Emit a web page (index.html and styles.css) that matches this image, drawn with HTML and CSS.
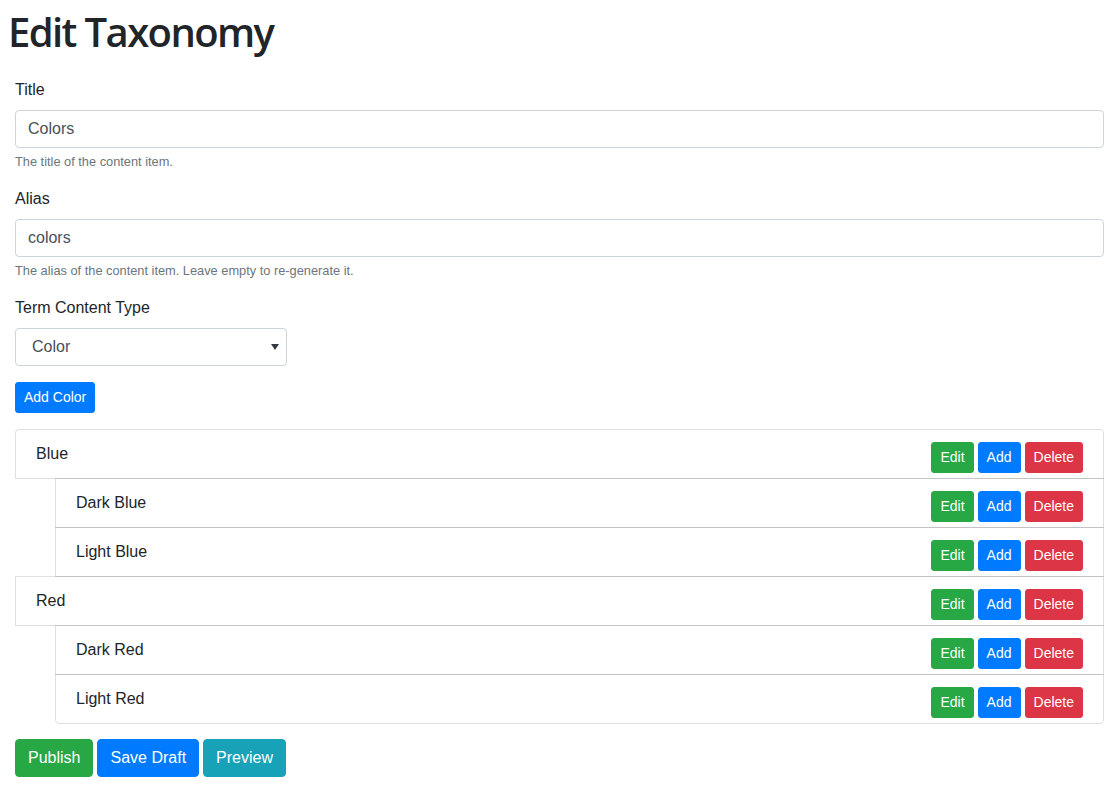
FILE: index.html
```html
<!DOCTYPE html>
<html lang="en">
<head>
<meta charset="utf-8">
<title>Edit Taxonomy</title>
<link rel="stylesheet" href="styles.css">
</head>
<body>
<h1 class="page-title">Edit Taxonomy</h1>
<form class="editor">
  <div class="form-group">
    <label class="field-label">Title</label>
    <input class="form-control" type="text" value="Colors">
    <small class="hint">The title of the content item.</small>
  </div>
  <div class="form-group">
    <label class="field-label">Alias</label>
    <input class="form-control" type="text" value="colors">
    <small class="hint">The alias of the content item. Leave empty to re-generate it.</small>
  </div>
  <div class="form-group">
    <label class="field-label">Term Content Type</label>
    <div class="select-wrap">
      <select class="custom-select"><option>Color</option></select>
    </div>
  </div>
  <button type="button" class="btn btn-sm btn-primary add-root">Add Color</button>
  <ul class="term-list">
    <li class="term"><span class="term-name">Blue</span><span class="actions"><button type="button" class="btn btn-sm btn-success">Edit</button><button type="button" class="btn btn-sm btn-primary">Add</button><button type="button" class="btn btn-sm btn-danger">Delete</button></span></li>
    <li class="term child"><span class="term-name">Dark Blue</span><span class="actions"><button type="button" class="btn btn-sm btn-success">Edit</button><button type="button" class="btn btn-sm btn-primary">Add</button><button type="button" class="btn btn-sm btn-danger">Delete</button></span></li>
    <li class="term child"><span class="term-name">Light Blue</span><span class="actions"><button type="button" class="btn btn-sm btn-success">Edit</button><button type="button" class="btn btn-sm btn-primary">Add</button><button type="button" class="btn btn-sm btn-danger">Delete</button></span></li>
    <li class="term"><span class="term-name">Red</span><span class="actions"><button type="button" class="btn btn-sm btn-success">Edit</button><button type="button" class="btn btn-sm btn-primary">Add</button><button type="button" class="btn btn-sm btn-danger">Delete</button></span></li>
    <li class="term child"><span class="term-name">Dark Red</span><span class="actions"><button type="button" class="btn btn-sm btn-success">Edit</button><button type="button" class="btn btn-sm btn-primary">Add</button><button type="button" class="btn btn-sm btn-danger">Delete</button></span></li>
    <li class="term child"><span class="term-name">Light Red</span><span class="actions"><button type="button" class="btn btn-sm btn-success">Edit</button><button type="button" class="btn btn-sm btn-primary">Add</button><button type="button" class="btn btn-sm btn-danger">Delete</button></span></li>
  </ul>
  <div class="footer-actions">
    <button type="button" class="btn btn-success">Publish</button>
    <button type="button" class="btn btn-primary">Save Draft</button>
    <button type="button" class="btn btn-info">Preview</button>
  </div>
</form>
</body>
</html>
```
FILE: styles.css
```css
* { box-sizing: border-box; }
html, body { margin: 0; padding: 0; }
body {
  font-family: "Liberation Sans", Arial, sans-serif;
  font-size: 16px;
  line-height: 1.5;
  color: #212529;
  background: #fff;
}
.page-title {
  margin: 8px 0 22px 8px;
  font-size: 40px;
  line-height: 48px;
  font-weight: 600;
  font-family: "Open Sans", "Liberation Sans", sans-serif;
  letter-spacing: -1.6px;
  color: #212529;
}
.editor { padding: 0 10px 20px 15px; }
.form-group { margin-bottom: 16px; }
.field-label { display: block; margin-bottom: 8px; line-height: 24px; }
.form-control {
  display: block;
  width: 100%;
  height: 38px;
  padding: 6px 12px;
  font: inherit;
  color: #495057;
  border: 1px solid #ced4da;
  border-radius: 4px;
  background: #fff;
}
.hint {
  display: block;
  margin-top: 4px;
  font-size: 12.8px;
  line-height: 19.2px;
  color: #6c757d;
}
.select-wrap { position: relative; width: 272px; }
.select-wrap::after {
  content: "";
  position: absolute;
  right: 8px;
  top: 16px;
  border-left: 4px solid transparent;
  border-right: 4px solid transparent;
  border-top: 6px solid #343a40;
}
.custom-select {
  display: block;
  width: 272px;
  height: 38px;
  padding: 6px 28px 6px 16px;
  font: inherit;
  color: #495057;
  border: 1px solid #ced4da;
  border-radius: 4px;
  background: #fff;
  -webkit-appearance: none;
  appearance: none;
}
.btn {
  display: inline-block;
  font: inherit;
  font-size: 16px;
  line-height: 24px;
  padding: 6px 12px;
  border: 1px solid transparent;
  border-radius: 4px;
  color: #fff;
  cursor: pointer;
  margin: 0;
}
.btn-sm { font-size: 14px; line-height: 21px; padding: 4px 8px; border-radius: 3px; }
.btn-primary { background: #007bff; border-color: #007bff; }
.btn-success { background: #28a745; border-color: #28a745; }
.btn-danger { background: #dc3545; border-color: #dc3545; }
.btn-info { background: #17a2b8; border-color: #17a2b8; }
.add-root { margin-bottom: 16px; }
.term-list { list-style: none; margin: 0 0 15px 0; padding: 0; }
.term {
  display: flex;
  align-items: flex-start;
  justify-content: space-between;
  padding: 12px 20px;
  height: 50px;
  margin-bottom: -1px;
  border: 1px solid rgba(0,0,0,.125);
}
.term:first-child { border-radius: 4px 4px 0 0; }
.term:last-child { border-radius: 0 0 4px 4px; margin-bottom: 0; }
.term.child { margin-left: 40px; }
.term-name { line-height: 24px; }
.actions { display: flex; gap: 4px; }
.footer-actions { display: flex; gap: 4px; }
```
